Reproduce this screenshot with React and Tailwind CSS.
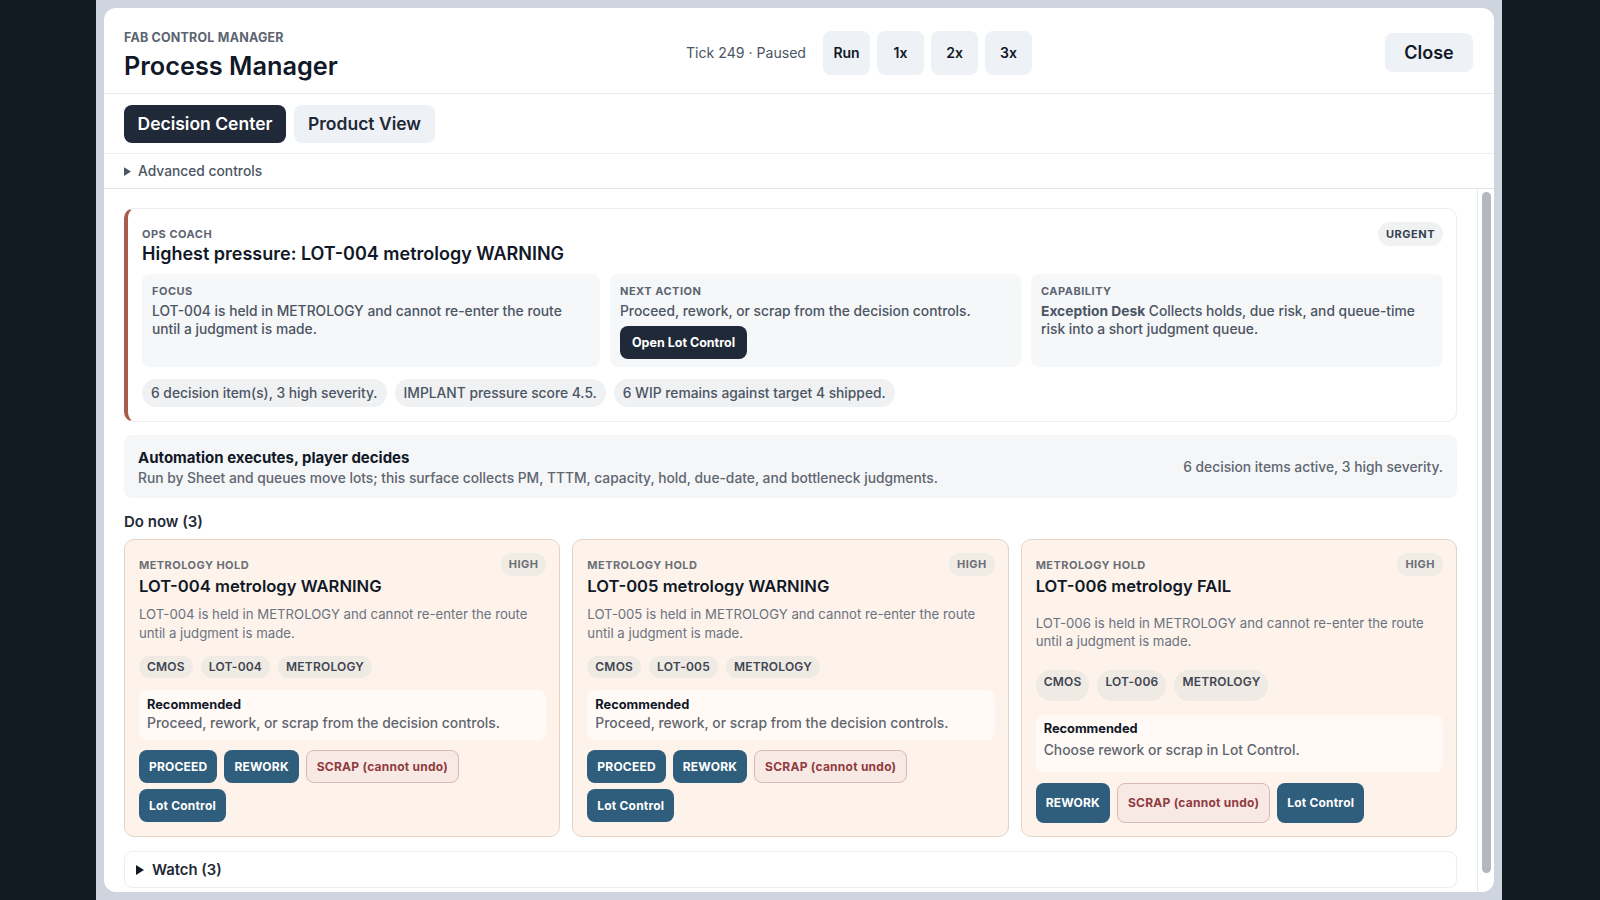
import React from 'react';

const lots = [
  {
    id: 'LOT-004',
    title: 'LOT-004 metrology WARNING',
    rec: 'Proceed, rework, or scrap from the decision controls.',
    actions: ['PROCEED', 'REWORK'],
  },
  {
    id: 'LOT-005',
    title: 'LOT-005 metrology WARNING',
    rec: 'Proceed, rework, or scrap from the decision controls.',
    actions: ['PROCEED', 'REWORK'],
  },
  {
    id: 'LOT-006',
    title: 'LOT-006 metrology FAIL',
    rec: 'Choose rework or scrap in Lot Control.',
    actions: ['REWORK'],
    tall: true,
  },
];

function Triangle({ className }) {
  return (
    <svg viewBox="0 0 8 10" className={className} fill="currentColor">
      <path d="M0 0 L8 5 L0 10 Z" />
    </svg>
  );
}

function SpeedButton({ children }) {
  return (
    <button className="h-11 w-[47px] rounded-lg bg-[#eef1f5] text-[14px] font-semibold text-[#111827]">
      {children}
    </button>
  );
}

function Cell({ label, children }) {
  return (
    <div className="rounded-lg bg-[#f5f7f9] px-[10px] pt-[10px] pb-2">
      <div className="h-[14px] text-[11px] leading-[14px] font-bold tracking-[0.5px] text-[#5b6470]">{label}</div>
      <div className="mt-[4px] text-[13.8px] leading-[18px] font-medium text-[#4b5563]">{children}</div>
    </div>
  );
}

function Pill({ children }) {
  return (
    <span className="flex h-7 items-center rounded-full bg-[#f0f1f3] px-[9px] text-[13.8px] font-medium text-[#4b5563]">
      {children}
    </span>
  );
}

function ActionButton({ children, tall }) {
  return (
    <button className={`rounded-lg bg-[#2f5d7c] px-[10px] text-[12px] font-bold tracking-[0.2px] text-white ${tall ? 'h-10' : 'h-[33px]'}`}>
      {children}
    </button>
  );
}

function ScrapButton({ tall }) {
  return (
    <button className={`rounded-lg border border-[#d9b9b2] bg-[#f9e9e4] px-[10px] text-[12px] font-bold tracking-[0.25px] text-[#8f3b3f] ${tall ? 'h-10' : 'h-[33px]'}`}>
      SCRAP (cannot undo)
    </button>
  );
}

function LotCard({ lot }) {
  const tall = lot.tall;
  return (
    <div className="h-[298px] rounded-[10px] border border-[#e3d3c5] bg-[#fdf3eb] pt-[13px] pr-[13px] pl-[14px]">
      <div className="flex items-start justify-between">
        <div>
          <div className="mt-[5px] text-[11px] leading-[14px] font-bold tracking-[0.45px] text-[#6b6f76]">METROLOGY HOLD</div>
          <div className="mt-[3px] text-[16.6px] leading-[22px] font-semibold text-[#111827]">{lot.title}</div>
        </div>
        <span className="flex h-[23px] items-center rounded-full bg-[#f0ebe5] px-2 text-[11px] font-bold tracking-[0.45px] text-[#6b6f76]">
          HIGH
        </span>
      </div>
      <p className={`text-[13.2px] text-[#6b7280] ${tall ? 'mt-[17px] leading-[18px]' : 'mt-[8px] leading-[18.5px]'}`}>
        {`${lot.id} is held in METROLOGY and cannot re-enter the route until a judgment is made.`}
      </p>
      <div className={`flex gap-2 ${tall ? 'mt-[20px]' : 'mt-[14px]'}`}>
        {['CMOS', lot.id, 'METROLOGY'].map((tag) => (
          <span
            key={tag}
            className={`rounded-full bg-[#efeae4] px-2 text-[12px] font-semibold tracking-[0.2px] text-[#3f4550] ${tall ? 'h-[31px] pt-[3px] leading-[18px]' : 'h-[22px] leading-[22px]'}`}
          >
            {tag}
          </span>
        ))}
      </div>
      <div className={`rounded-lg bg-[#fffaf6] px-2 ${tall ? 'mt-[14px] h-[57px] pt-[6px]' : 'mt-[12px] h-[50px] pt-[7px]'}`}>
        <div className="text-[12.8px] leading-[16px] font-bold text-[#111827]">Recommended</div>
        <div className={`text-[13.9px] font-medium text-[#5f6670] ${tall ? 'mt-[3px] leading-[20px]' : 'leading-[20px]'}`}>{lot.rec}</div>
      </div>
      <div className={`flex flex-wrap gap-x-[7px] gap-y-[6px] ${tall ? 'mt-[11px]' : 'mt-[10px]'}`}>
        {lot.actions.map((a) => (
          <ActionButton key={a} tall={tall}>{a}</ActionButton>
        ))}
        <ScrapButton tall={tall} />
        <ActionButton tall={tall}>Lot Control</ActionButton>
      </div>
    </div>
  );
}

export default function App() {
  return (
    <div className="flex h-[900px] w-[1600px] overflow-hidden bg-[#111a21] pr-[98px] pl-[96px] font-['Inter',sans-serif]">
      <div className="flex min-w-0 flex-1 bg-[#cfd5de] p-2">
        <div className="flex min-w-0 flex-1 flex-col overflow-hidden rounded-xl bg-white">
          {/* top bar */}
          <header className="flex h-[86px] shrink-0 items-center border-b border-[#e8eaee] pt-1 pr-[21px] pl-5">
            <div className="mt-2 w-[562px] shrink-0">
              <div className="text-[12.5px] leading-[16px] font-bold tracking-[0.2px] text-[#5b6470]">FAB CONTROL MANAGER</div>
              <h1 className="mt-[3px] text-[25.3px] leading-[34px] font-semibold text-[#111827]">Process Manager</h1>
            </div>
            <div className="flex items-center gap-[7px]">
              <span className="mr-[10px] text-[14.1px] text-[#4b5563]">Tick 249 · Paused</span>
              <SpeedButton>Run</SpeedButton>
              <SpeedButton>1x</SpeedButton>
              <SpeedButton>2x</SpeedButton>
              <SpeedButton>3x</SpeedButton>
            </div>
            <button className="ml-auto h-[39px] w-[88px] rounded-lg bg-[#eef1f5] text-[18px] font-semibold text-[#111827]">
              Close
            </button>
          </header>

          {/* tabs */}
          <div className="flex h-[60px] shrink-0 items-center gap-2 border-b border-[#eceef1] px-5">
            <button className="h-[38px] w-[162px] rounded-lg bg-[#1f2937] pt-[1px] text-[17.5px] font-semibold text-white">
              Decision Center
            </button>
            <button className="h-[38px] w-[141px] rounded-lg bg-[#eef1f5] pt-[1px] text-[17.5px] font-semibold text-[#1f2937]">
              Product View
            </button>
          </div>

          <div className="flex h-[35px] shrink-0 items-center gap-[7px] border-b border-[#e3e5e9] px-5 pt-[1px] text-[13.8px] font-medium text-[#4b5563]">
            <Triangle className="h-[9px] w-[7px]" />
            Advanced controls
          </div>

          {/* scrolling body */}
          <div className="flex min-h-0 flex-1">
            <main className="min-w-0 flex-1 overflow-hidden px-5 pt-[19px]">
              <section className="h-[214px] rounded-[10px] border border-l-4 border-[#eceef1] border-l-[#a85c4a] bg-white pt-[17px] pr-[13px] pl-[14px]">
                <div className="flex items-start justify-between">
                  <div>
                    <div className="text-[11px] leading-[16px] font-bold tracking-[0.5px] text-[#5b6470]">OPS COACH</div>
                    <div className="text-[18px] leading-[24px] font-semibold text-[#111827]">
                      Highest pressure: LOT-004 metrology WARNING
                    </div>
                  </div>
                  <span className="-mt-[4px] flex h-[24px] items-center rounded-full bg-[#f0f1f3] px-2 text-[11px] font-bold tracking-[0.5px] text-[#374151]">
                    URGENT
                  </span>
                </div>
                <div className="mt-[8px] grid h-[93px] grid-cols-[458px_411px_1fr] gap-[10px]">
                  <Cell label="FOCUS">LOT-004 is held in METROLOGY and cannot re-enter the route until a judgment is made.</Cell>
                  <Cell label="NEXT ACTION">
                    Proceed, rework, or scrap from the decision controls.
                    <button className="mt-[6px] block h-[33px] w-[127px] rounded-lg bg-[#1f2937] text-[12.5px] font-bold text-white">
                      Open Lot Control
                    </button>
                  </Cell>
                  <Cell label="CAPABILITY">
                    <b className="font-bold">Exception Desk</b> Collects holds, due risk, and queue-time risk into a short judgment queue.
                  </Cell>
                </div>
                <div className="mt-[12px] flex gap-2">
                  <Pill>6 decision item(s), 3 high severity.</Pill>
                  <Pill>IMPLANT pressure score 4.5.</Pill>
                  <Pill>6 WIP remains against target 4 shipped.</Pill>
                </div>
              </section>

              <section className="mt-[13px] flex h-[63px] items-center justify-between rounded-lg bg-[#f4f6f8] px-[14px] pt-[2px]">
                <div>
                  <div className="text-[15px] leading-[20px] font-bold text-[#111827]">Automation executes, player decides</div>
                  <div className="text-[13.8px] leading-[20px] font-medium text-[#5f6670]">
                    Run by Sheet and queues move lots; this surface collects PM, TTTM, capacity, hold, due-date, and bottleneck judgments.
                  </div>
                </div>
                <div className="text-[13.8px] font-medium text-[#5f6670]">6 decision items active, 3 high severity.</div>
              </section>

              <h2 className="mt-[14px] text-[15px] leading-[20px] font-semibold text-[#1f2937]">Do now (3)</h2>
              <div className="mt-[7px] grid grid-cols-3 gap-3">
                {lots.map((lot) => (
                  <LotCard key={lot.id} lot={lot} />
                ))}
              </div>

              <div className="mt-[14px] flex h-[37px] items-center gap-2 rounded-lg border border-[#eceef1] pt-[1px] pl-[11px] text-[14.8px] font-semibold text-[#1f2937]">
                <Triangle className="h-[10px] w-[8px] text-[#111827]" />
                Watch (3)
              </div>
            </main>

            {/* scrollbar */}
            <div className="w-[17px] shrink-0 border-l border-[#e8eaee] pt-[3px] pr-[3px] pb-[19px] pl-[4px]">
              <div className="h-full rounded-full bg-[#b4b8bd]" />
            </div>
          </div>
        </div>
      </div>
    </div>
  );
}
